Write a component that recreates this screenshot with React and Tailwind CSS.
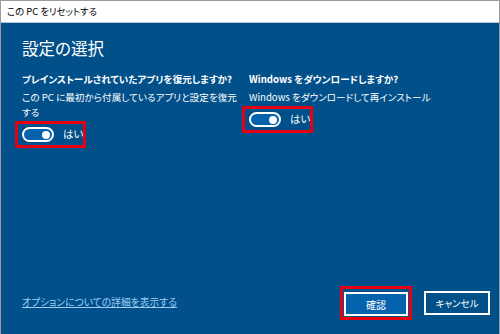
const FONT = "font-['Segoe_UI','Noto_Sans_CJK_JP',sans-serif] [font-feature-settings:'palt']";

function Toggle({ label }) {
  return (
    <div className="-ml-[7px] mt-[1px] flex h-[27px] w-[71px] items-center whitespace-nowrap border-[3px] border-[#e60012] pl-[4px]">
      <div className="flex h-[15px] w-[32px] shrink-0 items-center justify-end rounded-full border-2 border-white bg-[#0563ad] pr-[2px]">
        <div className="h-[8px] w-[8px] rounded-full bg-white" />
      </div>
      <span className="ml-[9px] text-[10.5px] leading-none text-white">{label}</span>
    </div>
  );
}

export default function App() {
  return (
    <div className={`flex h-[334px] w-[500px] flex-col border-x border-t border-[#9b9b9b] ${FONT}`}>
      {/* タイトルバー */}
      <div className="flex h-[22px] items-center border-b border-[#b7c7d8] bg-white pl-[6px] text-[9.4px] text-black">
        この PC をリセットする
      </div>

      <div className="flex flex-1 flex-col bg-[#01508a] pb-[14px] pl-[21px] pr-[9px] text-white">
        <h1 className="mt-[13px] text-[16.5px] leading-[24px] font-normal">設定の選択</h1>

        <div className="mt-[12px] grid grid-cols-[226px_1fr] gap-x-[1px]">
          <div>
            <p className="whitespace-nowrap text-[9.6px] leading-[15px] font-bold">プレインストールされていたアプリを復元しますか?</p>
            <p className="mt-[3px] text-[9.6px] leading-[15px]">
              この PC に最初から付属しているアプリと設定を復元
              <br />
              する
            </p>
            <Toggle label="はい" />
          </div>
          <div>
            <p className="whitespace-nowrap text-[9.6px] leading-[15px] font-bold">Windows をダウンロードしますか?</p>
            <p className="mt-[3px] text-[9.6px] leading-[15px]">Windows をダウンロードして再インストール</p>
            <Toggle label="はい" />
          </div>
        </div>

        <div className="flex-1" />

        {/* フッター */}
        <div className="flex items-center">
          <a href="#" className="text-[9.8px] text-[#9fcdf5] underline">オプションについての詳細を表示する</a>
          <div className="ml-auto flex items-center">
            <div className="border-[3px] border-[#e60012] p-[1px]">
              <button className="h-[24px] w-[64px] border-2 border-white bg-[#0563ad] text-[10px] text-white">確認</button>
            </div>
            <button className="ml-[12px] h-[24px] w-[66px] border-2 border-white text-[9.5px] text-white">キャンセル</button>
          </div>
        </div>
      </div>
    </div>
  );
}
